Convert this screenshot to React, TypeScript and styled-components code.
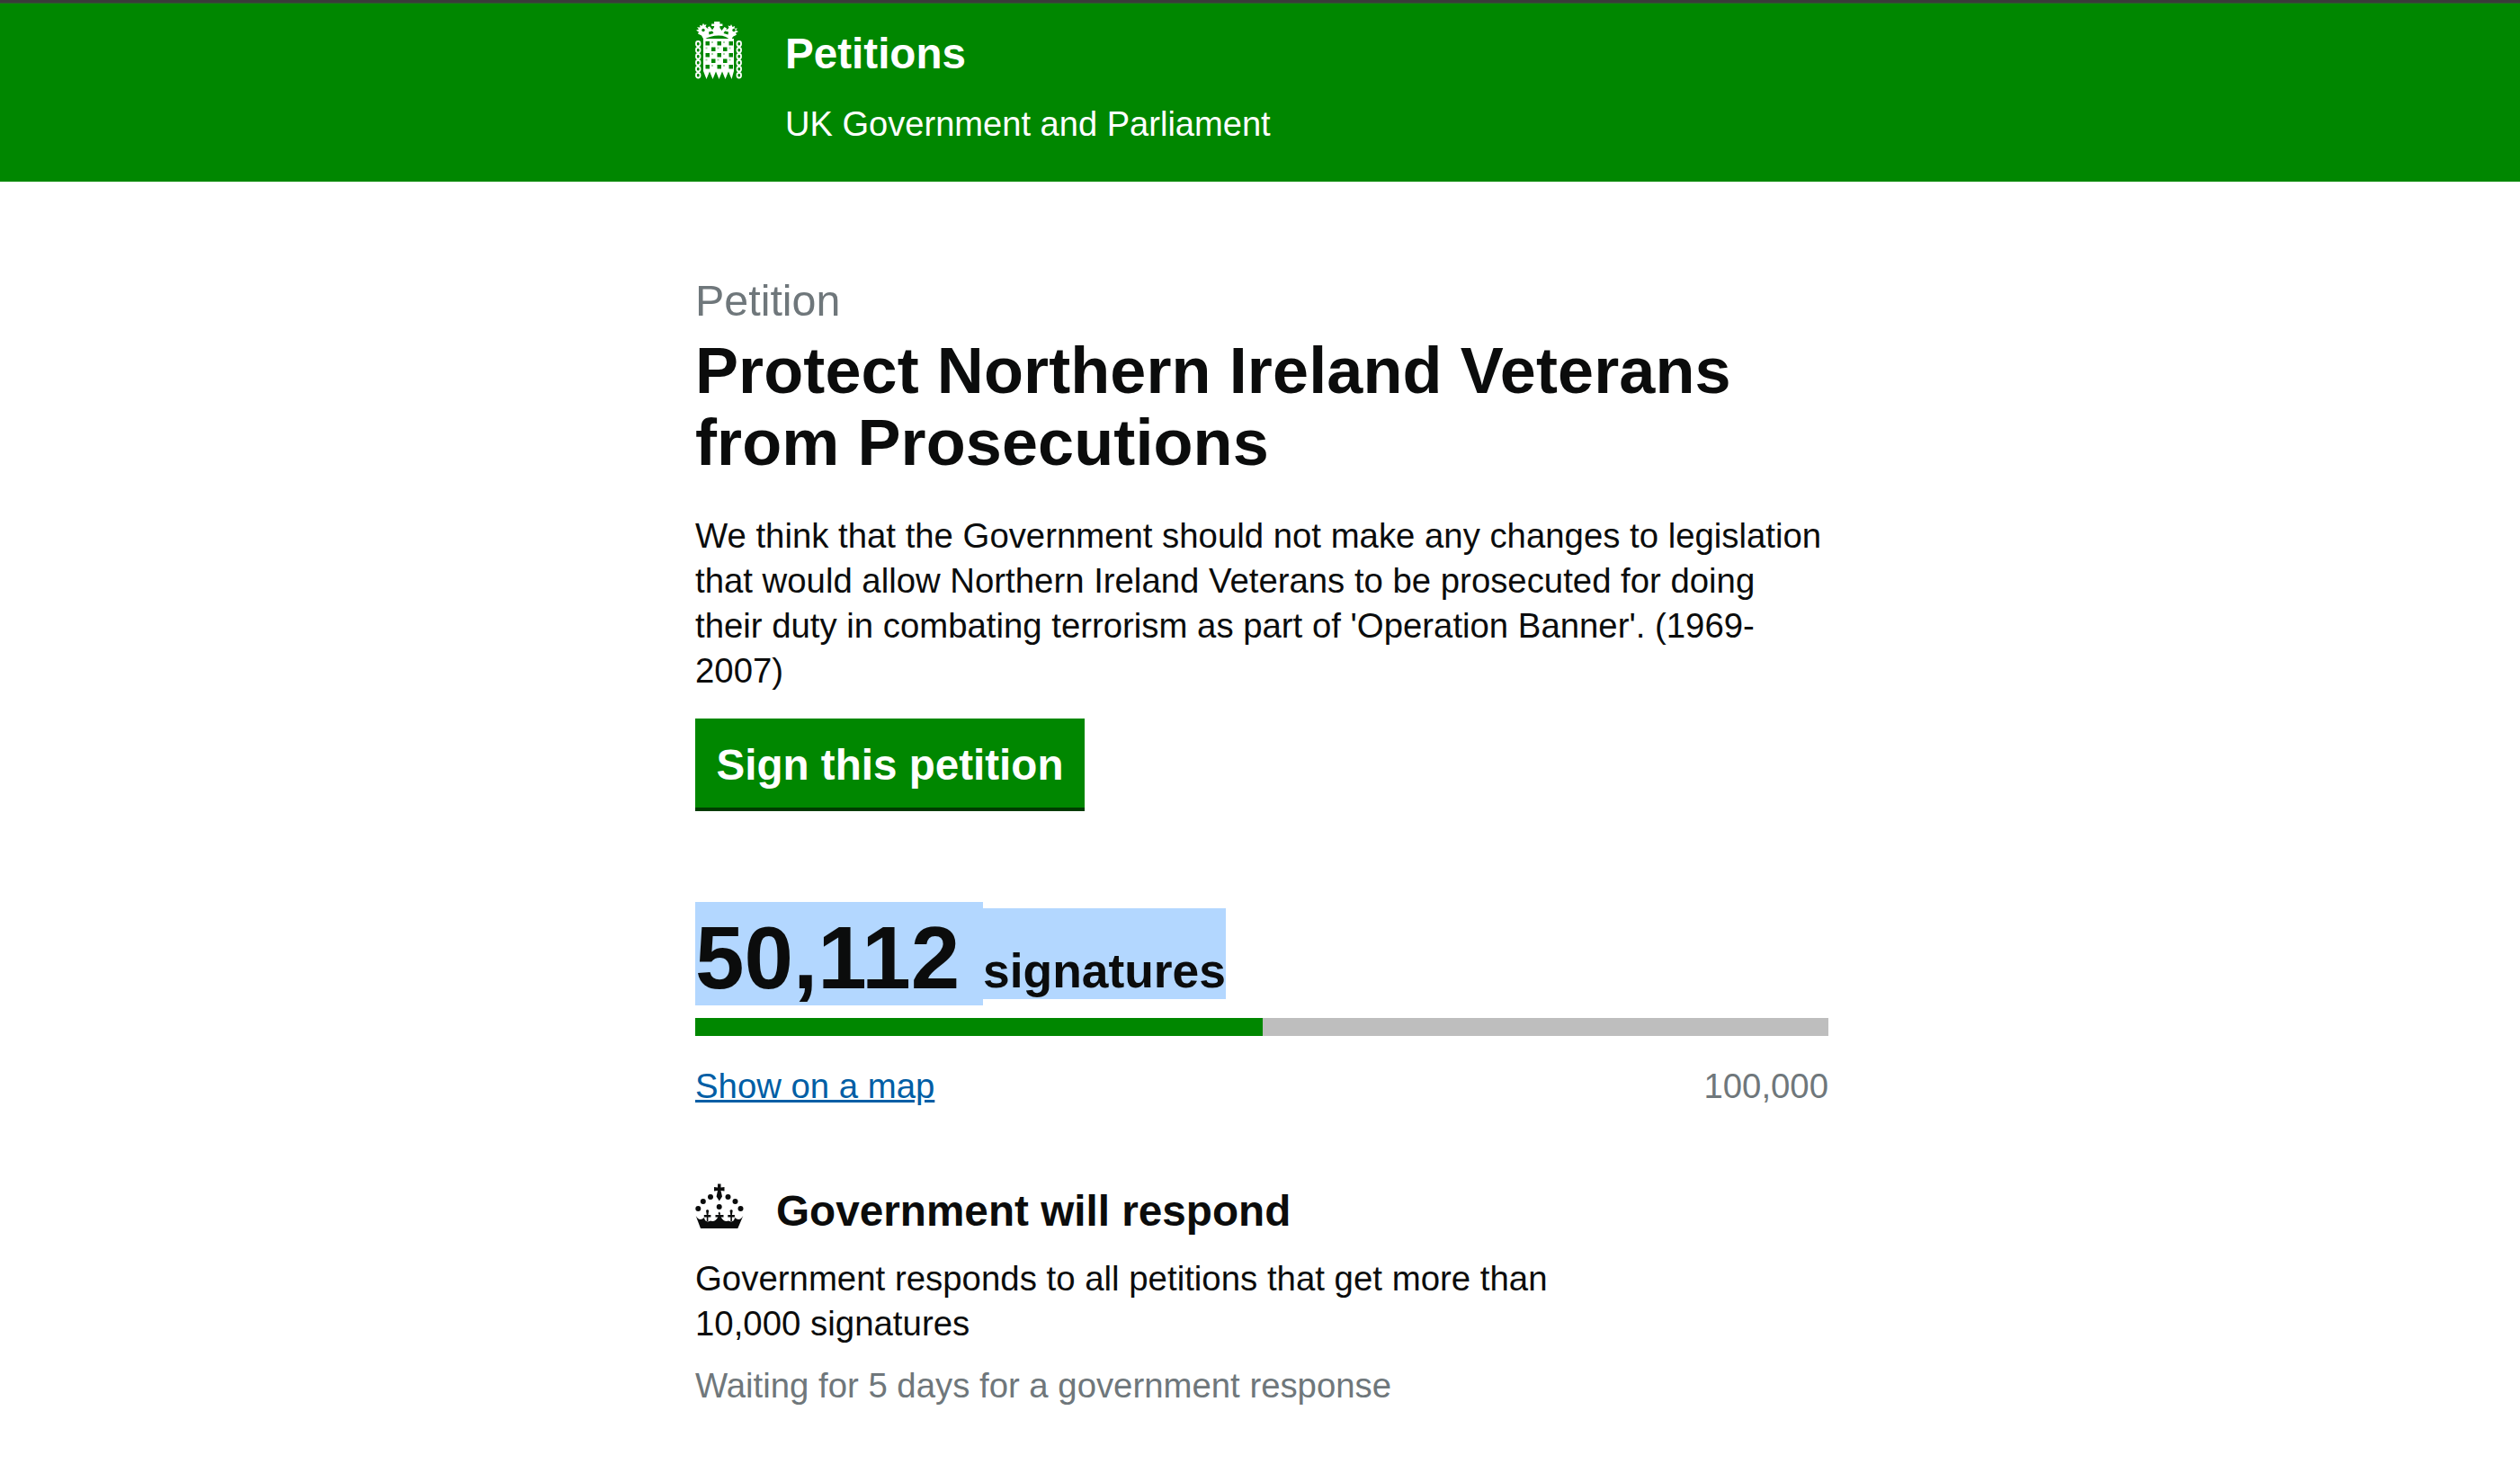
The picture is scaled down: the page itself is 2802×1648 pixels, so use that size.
import React from "react";
import styled, { createGlobalStyle } from "styled-components";

const Global = createGlobalStyle`
  html, body { margin: 0; padding: 0; background: #fff; }
  body { font-family: "Liberation Sans", Arial, sans-serif; color: #0b0c0c; }
`;

const Header = styled.header`
  height: 202px;
  box-sizing: border-box;
  background: #008700;
  border-top: 3px solid #3a3a3a;
  box-shadow: inset 0 1px 0 #2b5f2b;
  color: #fff;
`;
const HeaderInner = styled.div`
  width: 1260px;
  margin: 0 0 0 773px;
  display: grid;
  grid-template-columns: 100px 1fr;
  padding-top: 21px;
`;
const Brand = styled.div`
  display: flex;
  flex-direction: column;
  padding-top: 1px;
`;
const BrandName = styled.div`
  font-size: 47.6px;
  font-weight: 700;
  line-height: 70px;
`;
const BrandSub = styled.div`
  font-size: 38.1px;
  line-height: 50px;
  margin-top: 18px;
`;
const Main = styled.main`
  width: 1260px;
  margin-left: 773px;
  padding-top: 105px;
`;
const Eyebrow = styled.div`
  font-size: 48.4px;
  line-height: 54px;
  color: #6f777b;
`;
const Title = styled.h1`
  margin: 0;
  font-size: 72px;
  line-height: 80px;
  font-weight: 700;
  letter-spacing: 0.1px;
  padding-top: 11px;
`;
const Body = styled.p`
  margin: 0;
  max-width: 1255px;
  font-size: 38.35px;
  line-height: 50px;
  padding-top: 39px;
`;
const SignButton = styled.a`
  display: inline-block;
  box-sizing: border-box;
  margin-top: 28px;
  width: 433px;
  height: 103px;
  background: #008700;
  border-bottom: 4px solid #003b00;
  color: #fff;
  font-size: 47.6px;
  font-weight: 700;
  line-height: 103px;
  text-align: center;
`;
const Counts = styled.div`
  display: flex;
  align-items: flex-start;
  margin-top: 101px;
`;
const Count = styled.span`
  box-sizing: border-box;
  height: 115px;
  padding-top: 10px;
  font-size: 98px;
  font-weight: 700;
  line-height: 105px;
  width: 320px;
  background: #b3d7ff;
`;
const CountLabel = styled.span`
  box-sizing: border-box;
  height: 101px;
  margin-top: 7px;
  padding-top: 45px;
  font-size: 53.4px;
  font-weight: 700;
  line-height: 50px;
  width: 270px;
  background: #b3d7ff;
`;
const Track = styled.div`
  height: 20px;
  margin-top: 14px;
  background: #bebebe;
`;
const Fill = styled.div`
  height: 100%;
  background: #008700;
`;
const Meta = styled.div`
  display: flex;
  justify-content: space-between;
  font-size: 38.35px;
  line-height: 50px;
  margin-top: 31px;
`;
const MapLink = styled.a`
  color: #005ea5;
  text-decoration: underline;
`;
const Target = styled.span`
  color: #6f777b;
`;
const RespondHead = styled.div`
  display: grid;
  grid-template-columns: 90px 1fr;
  align-items: center;
  margin-top: 83px;
  svg {
    margin-bottom: 12px;
  }
`;
const RespondTitle = styled.h2`
  margin: 0;
  font-size: 47.7px;
  line-height: 60px;
  font-weight: 700;
`;
const RespondText = styled.p`
  margin: 0;
  padding-top: 19px;
  font-size: 38.4px;
  line-height: 50px;
`;
const Waiting = styled.p`
  margin: 0;
  padding-top: 19px;
  font-size: 38.35px;
  line-height: 50px;
  color: #6f777b;
`;

const G = "#008700";
const cols = [12, 18.5, 25, 31.5, 38];
const rows = [22, 28.5, 35, 41.5, 48];

const Portcullis = () => (
  <svg width="52" height="64" viewBox="0 0 52 64" fill="#fff" aria-hidden="true">
    <path d="M25 0h2.400v2.500h3v2.400h-3V7l2.100 3 3-4 2.500 1.500-.5 2 3-2.500-1-2.500 2.500.5 1-2 1.500 3 2.500-1-.5 2.800 3.500-.3-2 2.200 3 1.300-3 1.800 1 2-4 2-2.500 4.500Q35 15.500 26 15.500T9.500 20L7 15.500 3 13.500l1-2-3-1.800 3-1.300-2-2.200 3.500.3L5 3.700l2.500 1 1.500-3 1 2 2.500-.5-1 2.500 3 2.500-.5-2L16 5.200l3 4 2.100-3V5h-3V2.500h3V.1h4z" />
    <g fill={G}>
      <circle cx="9" cy="9.500" r="1.700" />
      <circle cx="43" cy="9.500" r="1.700" />
      <path d="M15 11.500l4-1 1.500 2.500-5 1.500zM37 11.500l-4-1-1.500 2.500 5 1.500z" />
    </g>
    <path d="M9 19h34v36l-2.500 9-3.500-8.500-3.500 8.500-3.500-8.500-3.500 8.500-3.500-8.500-3.500 8.500-3.500-8.500-3.500 8.500L9 55z" />
    {rows.map((y, r) =>
      cols.map((x, c) => (
        <rect
          key={`${r}-${c}`}
          x={x - 0.5}
          y={y}
          width={(r + c) % 2 === 0 ? 4.5 : 2}
          height={(r + c) % 2 === 0 ? 4.5 : 2}
          fill={G}
          opacity={(r + c) % 2 === 0 ? 1 : 0.35}
        />
      ))
    )}
    <g fill="none" stroke="#fff" strokeWidth="1.800">
      {[22, 29, 36, 43, 50, 57].map((y) => (
        <React.Fragment key={y}>
          <rect x="1" y={y} width="4.500" height="5.500" rx="2.200" />
          <rect x="46.500" y={y} width="4.500" height="5.500" rx="2.200" />
        </React.Fragment>
      ))}
    </g>
  </svg>
);

const dots = [
  [3.3, 28],
  [8.8, 20],
  [17, 15],
  [36.5, 15],
  [44.5, 20],
  [50.500, 28],
  [26.700, 26],
];

const Crown = () => (
  <svg width="54" height="50" viewBox="0 0 54 50" fill="#0b0c0c" aria-hidden="true">
    <path d="M25 .5h3.500v4l4-.5v4.500l-4-.5 1.500 6.500-3.200 5-3.200-5L25 8l-4 .5V4l4 .5z" />
    {dots.map(([cx, cy]) => (
      <circle key={`${cx}-${cy}`} cx={cx} cy={cy} r="3" />
    ))}
    <path d="M.7 36q4 7 9.300 2 .5 4 4 4.500l3.500-1q4 2 7.500-3.500l2-3.500 2 3.500q3.500 5.500 7.500 3.500l3.500 1q3.500-.5 4-4.500 5.300 5 9.300-2L47.300 50H6z" />
    <path d="M12 30l1.600-1 1.600 1-.8 5h3v2.500h-3V42h-1.600v-4.500h-3V35h3zM25.500 33l1.200-1.500 1.300 1.500-.4 2h3.900v2.500h-3V42h-3v-4.500h-3V35h3.900zM38.500 30l1.600-1 1.600 1-.8 5h3v2.500h-3V42h-1.600v-4.500h-3V35h3z" />
  </svg>
);

export default function App() {
  return (
    <>
      <Global />
      <Header>
        <HeaderInner>
          <Portcullis />
          <Brand>
            <BrandName>Petitions</BrandName>
            <BrandSub>UK Government and Parliament</BrandSub>
          </Brand>
        </HeaderInner>
      </Header>
      <Main>
        <Eyebrow>Petition</Eyebrow>
        <Title>
          Protect Northern Ireland Veterans
          <br />
          from Prosecutions
        </Title>
        <Body>
          We think that the Government should not make any changes to legislation that would allow
          Northern Ireland Veterans to be prosecuted for doing their duty in combating terrorism as
          part of 'Operation Banner'. (1969-2007)
        </Body>
        <SignButton>Sign this petition</SignButton>
        <Counts>
          <Count>50,112</Count>
          <CountLabel>signatures</CountLabel>
        </Counts>
        <Track>
          <Fill style={{ width: `${(50112 / 100000) * 100}%` }} />
        </Track>
        <Meta>
          <MapLink>Show on a map</MapLink>
          <Target>100,000</Target>
        </Meta>
        <RespondHead>
          <Crown />
          <RespondTitle>Government will respond</RespondTitle>
        </RespondHead>
        <RespondText>
          Government responds to all petitions that get more than
          <br />
          10,000 signatures
        </RespondText>
        <Waiting>Waiting for 5 days for a government response</Waiting>
      </Main>
    </>
  );
}
